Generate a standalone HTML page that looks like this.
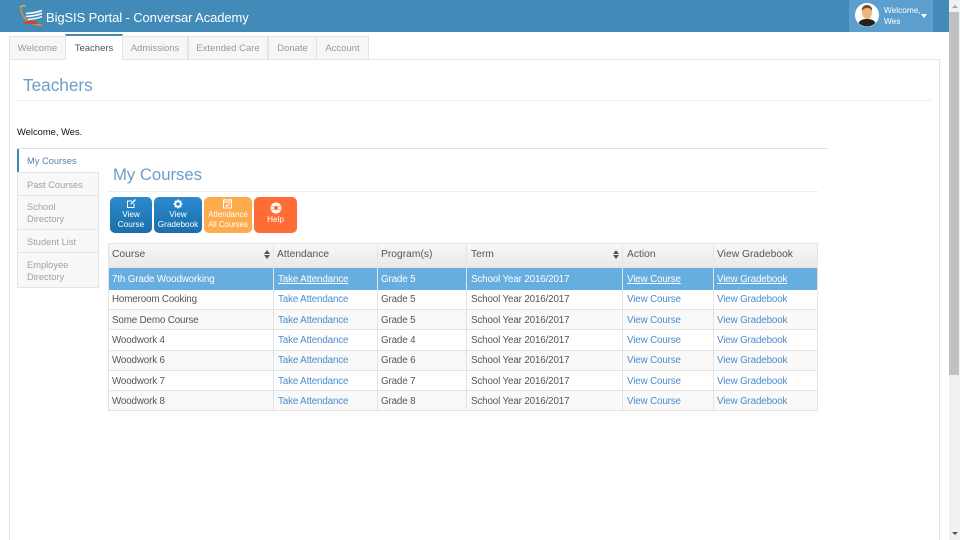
<!DOCTYPE html>
<html><head><meta charset="utf-8"><style>
html,body{margin:0;padding:0;width:960px;height:540px;overflow:hidden;background:#fff;font-family:"Liberation Sans",sans-serif;}
#w{position:relative;width:960px;height:540px;overflow:hidden;}
.a{position:absolute;white-space:nowrap;}
.tab{position:absolute;top:36px;height:23px;box-sizing:border-box;background:#f6f6f6;border:1px solid #dfe5e9;border-bottom:none;color:#999;font-size:9.5px;line-height:23px;text-align:center;}
.nav{position:absolute;left:17px;width:82px;box-sizing:border-box;background:#f8f8f8;border:1px solid #e2e6e9;color:#a0a0a0;font-size:9.3px;line-height:11.5px;padding:7px 0 0 9px;}
.btn{position:absolute;top:197px;height:36px;border-radius:5px;box-sizing:border-box;color:#fff;font-size:8.2px;line-height:10px;text-align:center;padding-top:17px;}
.c{position:absolute;font-size:9.8px;letter-spacing:-.14px;color:#555;white-space:nowrap;line-height:12px;}
.h{position:absolute;font-size:10.3px;color:#555;white-space:nowrap;line-height:12px;top:249px;}
.l{color:#4a8ccb;}
.s{color:#fff;text-decoration:underline;}
.vl{position:absolute;width:1px;background:#e4e4e4;top:243px;height:168px;}
.row{position:absolute;left:108px;width:710px;border-bottom:1px solid #e4e4e4;box-sizing:border-box;}
</style></head><body><div id="w">
<div class="a" style="left:0;top:0;width:949px;height:32px;background:#428bb8;"></div>
<svg class="a" style="left:18px;top:4px" width="28" height="24" viewBox="0 0 28 24">
<path d="M2.500 3C3 11 9 21 24 21" fill="none" stroke="#ef8a2a" stroke-width="1.500"/>
<path d="M2.500 3C3 2 5 1.500 8 2" fill="none" stroke="#f3b33a" stroke-width="1.200"/>
<path d="M8 9.500C12 9 18 9 24 6.500M8 12.500C12 12 18 12 24 9.500M10 15.500C13 15 19 15 24 12.500" fill="none" stroke="#fff" stroke-width="1.500"/>
<path d="M5 20L9 17H18L20 20Z" fill="#d9432c"/>
</svg>
<div class="a" style="left:46px;top:9px;font-size:13px;letter-spacing:-.1px;color:#fff;line-height:17px;">BigSIS Portal - Conversar Academy</div>
<div class="a" style="left:849px;top:0;width:84px;height:32px;background:#5c9fce;"></div>
<svg class="a" style="left:855px;top:3px" width="24" height="24" viewBox="0 0 24 24">
<circle cx="12" cy="12" r="12" fill="#fff"/>
<path d="M3.500 20C5 16.500 9 16 12 16S19 16.500 20.500 20A12 12 0 0 1 3.500 20Z" fill="#222"/>
<ellipse cx="12" cy="9.500" rx="5" ry="6.500" fill="#eeb67e"/>
<path d="M6.800 8C6.500 3 10 1.800 12.500 2S17.500 4 17 8C16 5.500 14 5 12 5S8 6 6.800 8Z" fill="#7a4a1e"/>
</svg>
<div class="a" style="left:884px;top:5px;font-size:8.300px;line-height:10.500px;color:#fff;">Welcome,<br>Wes</div>
<div class="a" style="left:921px;top:14px;border-left:3.500px solid transparent;border-right:3.500px solid transparent;border-top:4px solid #fff;"></div>
<div class="a" style="left:949px;top:0;width:11px;height:540px;background:#f1f1f1;"></div>
<div class="a" style="left:949px;top:12px;width:10px;height:363px;background:#c1c1c1;"></div>
<div class="a" style="left:952px;top:5px;border-left:3px solid transparent;border-right:3px solid transparent;border-bottom:3px solid #a3a3a3;"></div>
<div class="a" style="left:952px;top:532px;border-left:3px solid transparent;border-right:3px solid transparent;border-top:3px solid #505050;"></div>

<div class="a" style="left:9px;top:59px;width:931px;height:490px;box-sizing:border-box;border:1px solid #dbe6ee;background:#fff;"></div>
<div class="tab" style="left:9px;width:57px;">Welcome</div>
<div class="tab" style="left:65px;top:34px;height:26px;width:58px;background:#fff;color:#555;border-top:2px solid #428bb8;line-height:25px;z-index:2;">Teachers</div>
<div class="tab" style="left:122px;width:66px;">Admissions</div>
<div class="tab" style="left:188px;width:80px;">Extended Care</div>
<div class="tab" style="left:268px;width:49px;">Donate</div>
<div class="tab" style="left:316px;width:53px;">Account</div>

<div class="a" style="left:23px;top:73px;font-size:17.2px;line-height:24px;color:#6a9dcc;">Teachers</div>
<div class="a" style="left:17px;top:100px;width:914px;height:1px;background:#eee;"></div>
<div class="a" style="left:17px;top:125px;font-size:9.400px;line-height:13px;color:#111;">Welcome, Wes.</div>

<div class="a" style="left:17px;top:148px;width:810px;height:1px;background:#dde3e8;"></div>
<div class="nav" style="top:172px;height:24px;">Past Courses</div>
<div class="nav" style="top:195px;height:35px;padding-top:6px;">School<br>Directory</div>
<div class="nav" style="top:229px;height:24px;">Student List</div>
<div class="nav" style="top:252px;height:36px;">Employee<br>Directory</div>
<div class="nav" style="top:149px;height:23px;background:#fff;border:none;border-left:2px solid #428bb8;color:#5a80a8;padding:7px 0 0 8px;">My Courses</div>

<div class="a" style="left:113px;top:163px;font-size:16.700px;line-height:24px;color:#6a9dcc;">My Courses</div>
<div class="a" style="left:108px;top:191px;width:710px;height:1px;background:#eee;"></div>

<div class="btn" style="left:110px;width:42px;background:linear-gradient(#2c8ad0,#1a6fa8);padding-top:13px;">View<br>Course</div>
<div class="btn" style="left:154px;width:48px;background:linear-gradient(#2c8ad0,#1a6fa8);padding-top:13px;">View<br>Gradebook</div>
<div class="btn" style="left:204px;width:48px;background:#fdab4d;padding-top:13px;font-size:7.800px;">Attendance<br>All Courses</div>
<div class="btn" style="left:254px;width:43px;background:#ff6c36;padding-top:18px;">Help</div>
<svg class="a" style="left:126px;top:198px" width="11" height="11" viewBox="0 0 11 11"><path d="M8 5.500V9.500H1.500V3H6" fill="none" stroke="#fff" stroke-width="1"/><path d="M4.500 7L5 5L9 1L10 2L6 6Z" fill="#fff"/></svg>
<svg class="a" style="left:173px;top:199px" width="10" height="10" viewBox="0 0 10 10"><circle cx="5" cy="5" r="2.800" fill="none" stroke="#fff" stroke-width="2"/><path d="M5 .5V2M5 8V9.500M.5 5H2M8 5H9.500M1.800 1.800L3 3M7 7L8.200 8.200M8.200 1.800L7 3M3 7L1.800 8.200" stroke="#fff" stroke-width="1.300"/></svg>
<svg class="a" style="left:222px;top:198px" width="11" height="11" viewBox="0 0 11 11"><rect x="1.500" y="2" width="8" height="8" fill="none" stroke="#fff"/><path d="M1.500 4H9.500" stroke="#fff"/><path d="M3 .8V2.500M8 .8V2.500" stroke="#fff"/><path d="M3.500 7L5 8.300L7.500 5.500" fill="none" stroke="#fff"/></svg>
<svg class="a" style="left:270px;top:202px" width="12" height="12" viewBox="0 0 12 12"><circle cx="6" cy="6" r="5.500" fill="#fff"/><circle cx="6" cy="6" r="2.200" fill="#ff6c36"/><path d="M.8 4.200H3.800M8.200 4.200H11.200M.8 7.800H3.800M8.200 7.800H11.200" stroke="#ff6c36" stroke-width=".7"/></svg>

<div class="a" style="left:108px;top:243px;width:710px;height:25px;box-sizing:border-box;border:1px solid #e4e4e4;background:linear-gradient(#f8f8f8,#e9e9e9);"></div>
<div class="row" style="top:268px;height:22px;background:#66ade0;border:none;"></div>
<div class="row" style="top:290px;height:20px;background:#fff;"></div>
<div class="row" style="top:310px;height:20px;background:#f9f9f9;"></div>
<div class="row" style="top:330px;height:21px;background:#fff;"></div>
<div class="row" style="top:351px;height:20px;background:#f9f9f9;"></div>
<div class="row" style="top:371px;height:20px;background:#fff;"></div>
<div class="row" style="top:391px;height:20px;background:#f9f9f9;"></div>
<div class="vl" style="left:108px;"></div><div class="vl" style="left:273px;"></div><div class="vl" style="left:377px;"></div><div class="vl" style="left:466px;"></div><div class="vl" style="left:622px;"></div><div class="vl" style="left:713px;"></div><div class="vl" style="left:817px;"></div>

<div class="h" style="left:112px;">Course</div><div class="h" style="left:277px;">Attendance</div><div class="h" style="left:381px;">Program(s)</div><div class="h" style="left:471px;">Term</div><div class="h" style="left:627px;">Action</div><div class="h" style="left:717px;">View Gradebook</div>
<div class="a" style="left:264px;top:250px;border-left:3px solid transparent;border-right:3px solid transparent;border-bottom:4px solid #555;"></div>
<div class="a" style="left:264px;top:255px;border-left:3px solid transparent;border-right:3px solid transparent;border-top:4px solid #555;"></div>
<div class="a" style="left:613px;top:250px;border-left:3px solid transparent;border-right:3px solid transparent;border-bottom:4px solid #555;"></div>
<div class="a" style="left:613px;top:255px;border-left:3px solid transparent;border-right:3px solid transparent;border-top:4px solid #555;"></div>

<div class="c" style="left:112px;top:274px;color:#fff;">7th Grade Woodworking</div><div class="c s" style="left:278px;top:274px;">Take Attendance</div><div class="c" style="left:381px;top:274px;color:#fff;">Grade 5</div><div class="c" style="left:471px;top:274px;color:#fff;">School Year 2016/2017</div><div class="c s" style="left:627px;top:274px;">View Course</div><div class="c s" style="left:717px;top:274px;">View Gradebook</div>
<div class="c" style="left:112px;top:294px;">Homeroom Cooking</div><div class="c l" style="left:278px;top:294px;">Take Attendance</div><div class="c" style="left:381px;top:294px;">Grade 5</div><div class="c" style="left:471px;top:294px;">School Year 2016/2017</div><div class="c l" style="left:627px;top:294px;">View Course</div><div class="c l" style="left:717px;top:294px;">View Gradebook</div>
<div class="c" style="left:112px;top:315px;">Some Demo Course</div><div class="c l" style="left:278px;top:315px;">Take Attendance</div><div class="c" style="left:381px;top:315px;">Grade 5</div><div class="c" style="left:471px;top:315px;">School Year 2016/2017</div><div class="c l" style="left:627px;top:315px;">View Course</div><div class="c l" style="left:717px;top:315px;">View Gradebook</div>
<div class="c" style="left:112px;top:335px;">Woodwork 4</div><div class="c l" style="left:278px;top:335px;">Take Attendance</div><div class="c" style="left:381px;top:335px;">Grade 4</div><div class="c" style="left:471px;top:335px;">School Year 2016/2017</div><div class="c l" style="left:627px;top:335px;">View Course</div><div class="c l" style="left:717px;top:335px;">View Gradebook</div>
<div class="c" style="left:112px;top:355px;">Woodwork 6</div><div class="c l" style="left:278px;top:355px;">Take Attendance</div><div class="c" style="left:381px;top:355px;">Grade 6</div><div class="c" style="left:471px;top:355px;">School Year 2016/2017</div><div class="c l" style="left:627px;top:355px;">View Course</div><div class="c l" style="left:717px;top:355px;">View Gradebook</div>
<div class="c" style="left:112px;top:376px;">Woodwork 7</div><div class="c l" style="left:278px;top:376px;">Take Attendance</div><div class="c" style="left:381px;top:376px;">Grade 7</div><div class="c" style="left:471px;top:376px;">School Year 2016/2017</div><div class="c l" style="left:627px;top:376px;">View Course</div><div class="c l" style="left:717px;top:376px;">View Gradebook</div>
<div class="c" style="left:112px;top:396px;">Woodwork 8</div><div class="c l" style="left:278px;top:396px;">Take Attendance</div><div class="c" style="left:381px;top:396px;">Grade 8</div><div class="c" style="left:471px;top:396px;">School Year 2016/2017</div><div class="c l" style="left:627px;top:396px;">View Course</div><div class="c l" style="left:717px;top:396px;">View Gradebook</div>
</div></body></html>
